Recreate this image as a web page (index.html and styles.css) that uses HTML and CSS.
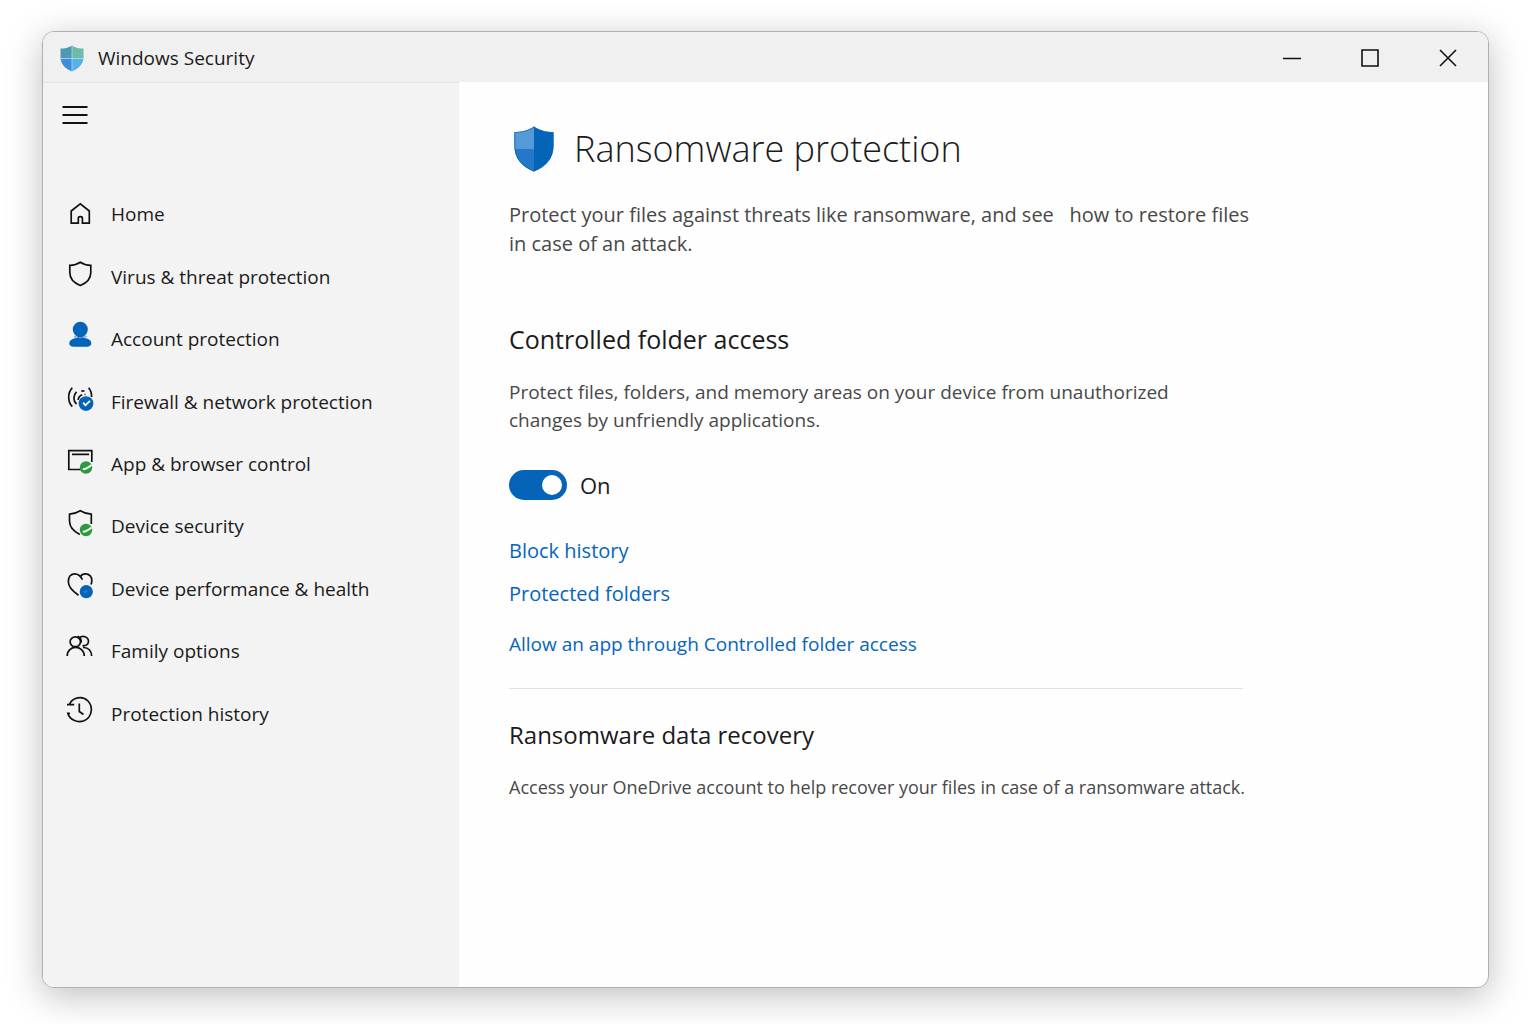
FILE: index.html
```html
<!DOCTYPE html>
<html lang="en">
<head>
    <meta charset="UTF-8">
    <meta name="viewport" content="width=device-width, initial-scale=1.0">
    <title>Windows Security</title>
    <link rel="stylesheet" href="styles.css">
</head>
<body>
    <div class="window">
        <header class="titlebar">
            <svg class="app-icon" viewBox="0 0 24 27">
                <defs>
                    <clipPath id="appShield">
                        <path d="M12 0.500C8.500 3 4.500 3.600 0.500 3.600V12C0.500 19 5 23.500 12 26.500C19 23.500 23.500 19 23.500 12V3.600C19.500 3.600 15.500 3 12 0.500Z"/>
                    </clipPath>
                </defs>
                <g clip-path="url(#appShield)">
                    <rect width="12" height="13.500" fill="#5099b4"/>
                    <rect x="12" width="12" height="13.500" fill="#6dbba9"/>
                    <rect y="13.500" width="12" height="14" fill="#3f8ddc"/>
                    <rect x="12" y="13.500" width="12" height="14" fill="#55b1e8"/>
                    <path d="M12 0V27M0 13.500H24" stroke="#a5dcec" stroke-width="0.800"/>
                </g>
            </svg>
            <span class="app-name">Windows Security</span>
            <div class="controls">
                <button type="button" aria-label="Minimize">
                    <svg viewBox="0 0 20 20"><path d="M1 10.500H19"/></svg>
                </button>
                <button type="button" aria-label="Maximize">
                    <svg viewBox="0 0 20 20"><path d="M2 2H18V18H2Z"/></svg>
                </button>
                <button type="button" aria-label="Close">
                    <svg viewBox="0 0 20 20"><path d="M2 2L18 18M18 2L2 18"/></svg>
                </button>
            </div>
        </header>

        <div class="content">
            <aside class="sidebar">
                <button type="button" class="menu-btn" aria-label="Menu">
                    <svg viewBox="0 0 26 20"><path d="M0.500 2H25.500M0.500 10H25.500M0.500 18H25.500"/></svg>
                </button>
                <nav>
                    <ul class="nav-list">
                        <li><a href="#">
                            <svg viewBox="0 0 28 28"><path d="M5.200 14L14.300 6.800L23.300 14V26.200H16.400V21.200Q16.400 19.600 14.300 19.600Q12.300 19.600 12.300 21.200V26.200H5.200Z"/></svg>
                            <span>Home</span>
                        </a></li>
                        <li><a href="#">
                            <svg viewBox="0 0 28 28"><path d="M14.300 2.200C11 4.500 7.500 5.200 3.800 5.400V12.500C3.800 18.800 8 23 14.300 25.500C20.600 23 24.800 18.800 24.800 12.500V5.400C21 5.200 17.600 4.500 14.300 2.200Z"/></svg>
                            <span>Virus &amp; threat protection</span>
                        </a></li>
                        <li><a href="#">
                            <svg viewBox="0 0 28 28">
                                <g class="blue">
                                    <ellipse cx="14.300" cy="7.600" rx="7.500" ry="7.800"/>
                                    <path d="M3.300 21.500C3.300 17.500 8 15.800 14.300 15.800C20.600 15.800 25.300 17.500 25.300 21.500C25.300 24 23 24.700 20.500 24.700H8C5.500 24.700 3.300 24 3.300 21.500Z"/>
                                    <path class="gap-line" d="M8 14.600Q14.300 17.200 20.600 14.600"/>
                                </g>
                            </svg>
                            <span>Account protection</span>
                        </a></li>
                        <li><a href="#">
                            <svg viewBox="0 0 28 28">
                                <path d="M6.300 2.800C1.500 7.500 1.500 17 6.300 21.600M10.500 6.800C7 10.500 7 15.500 10.500 19.200M16.200 9.800Q12.500 11.200 12.200 15M15.300 6.300Q17 5.600 18.500 6.200M22.600 2.800Q25.800 6.500 25.600 12M18.500 9.500H19.500"/>
                                <circle class="blue" cx="20" cy="18.600" r="7.400"/>
                                <path class="mark" d="M17.200 17.500L19.400 20.500M24 15.800L18.800 20.800"/>
                            </svg>
                            <span>Firewall &amp; network protection</span>
                        </a></li>
                        <li><a href="#">
                            <svg viewBox="0 0 28 28">
                                <path d="M15 22.500H2.800V3.700H25.800V15M6 7.400H23"/>
                                <circle class="green" cx="20" cy="20.500" r="6.200"/>
                                <path class="mark" d="M16.800 22.200Q20 22.500 25.500 18"/>
                            </svg>
                            <span>App &amp; browser control</span>
                        </a></li>
                        <li><a href="#">
                            <svg viewBox="0 0 28 28">
                                <path d="M13.800 25.500C7 22 3.500 18 3.500 12V5.200Q9.500 4.800 14.300 1.800Q19 4.800 25.300 5.200V15"/>
                                <circle class="green" cx="20" cy="21" r="6.200"/>
                                <path class="mark" d="M16.800 22.700Q20 23 25.500 18.500"/>
                            </svg>
                            <span>Device security</span>
                        </a></li>
                        <li><a href="#">
                            <svg viewBox="0 0 28 28">
                                <path d="M12.500 23.200C7 19.500 2.300 15.500 2.300 9.500C2.300 4.500 5 1.800 8.800 1.800C12.500 1.800 14.500 4 16.500 7.600M14.500 4.500C15.500 2.600 17.500 1.800 19.500 1.800C23.500 1.800 26 5 25.800 8.500Q25.800 10.500 25 12.500"/>
                                <circle class="blue" cx="20.300" cy="19.700" r="6.600"/>
                                <path class="tiny-mark" d="M18 19.300L19 20.500L21 18.500"/>
                            </svg>
                            <span>Device performance &amp; health</span>
                        </a></li>
                        <li><a href="#">
                            <svg viewBox="0 0 28 28">
                                <ellipse cx="9.300" cy="7.800" rx="5.200" ry="4.900"/>
                                <path d="M11.500 2.200Q15.500 3.500 15.300 8.500M13.500 3.800C16 1.200 22.300 2.300 22.500 7.300C22.500 10.500 19.500 12.300 16.500 11.500M1.200 22C1.200 10.500 18 10.500 18.300 22M17 13.500C22.500 13.200 25.500 17 25.700 22"/>
                            </svg>
                            <span>Family options</span>
                        </a></li>
                        <li><a href="#">
                            <svg viewBox="0 0 28 28"><path d="M3.200 7.500C6.500 0.500 16 -2 22 4C28 10.500 25.500 20.500 18 23.700C11 26.200 3.500 22.500 1.800 16.300H4M1 7.700H8.200M13.300 6.500V14.500L17.500 17.500"/></svg>
                            <span>Protection history</span>
                        </a></li>
                    </ul>
                </nav>
            </aside>

            <main class="main">
                <div class="page-title">
                    <svg viewBox="0 0 40 46">
                        <defs>
                            <clipPath id="pageShield">
                                <path d="M20 0.500C14.500 4.600 8 6 0.500 6.200V20C0.500 32.500 8 40.500 20 45.500C32 40.500 39.500 32.500 39.500 20V6.200C32 6 25.500 4.600 20 0.500Z"/>
                            </clipPath>
                        </defs>
                        <g clip-path="url(#pageShield)">
                            <rect width="40" height="46" fill="#0364b8"/>
                            <rect width="20" height="23" fill="#5499d8"/>
                            <rect y="23" width="20" height="23" fill="#2478c7"/>
                            <path d="M20 0.500C14.500 4.600 8 6 0.500 6.200V20C0.500 32.500 8 40.500 20 45.500C32 40.500 39.500 32.500 39.500 20V6.200C32 6 25.500 4.600 20 0.500Z" fill="none" stroke="#1268bb" stroke-width="1.500"/>
                        </g>
                    </svg>
                    <h1>Ransomware protection</h1>
                </div>
                <p class="intro">Protect your files against threats like ransomware, and see &nbsp;&nbsp;how to restore files<br>in case of an attack.</p>

                <section class="folder-access">
                    <h2>Controlled folder access</h2>
                    <p>Protect files, folders, and memory areas on your device from unauthorized<br>changes by unfriendly applications.</p>
                    <div class="switch">
                        <input type="checkbox" id="access" role="switch" checked>
                        <label for="access">On</label>
                    </div>
                    <ul class="links">
                        <li><a href="#">Block history</a></li>
                        <li><a href="#">Protected folders</a></li>
                        <li class="apart"><a href="#">Allow an app through Controlled folder access</a></li>
                    </ul>
                </section>

                <section class="recovery">
                    <h2>Ransomware data recovery</h2>
                    <p>Access your OneDrive account to help recover your files in case of a ransomware attack.</p>
                </section>
            </main>
        </div>
    </div>
</body>
</html>
```

FILE: styles.css
```css
*{
    margin: 0;
    padding: 0;
    box-sizing: border-box;
}
body{
    min-height: 100vh;
    padding: 31px 47px 36px 42px;
    display: flex;
    background-color: #fff;
    color: #1b1b1b;
    font-family: "Open Sans", "Noto Sans", sans-serif;
    font-size: 19px;
}
ul{
    list-style: none;
}
a{
    text-decoration: none;
}
button{
    border: none;
    background: none;
    cursor: pointer;
}
svg{
    display: block;
    flex-shrink: 0;
    overflow: visible;
}
.window{
    flex: 1;
    display: flex;
    flex-direction: column;
    border: 1px solid #b0b0b0;
    border-radius: 12px;
    overflow: hidden;
    background-color: #fefefe;
    box-shadow: 0 8px 36px rgba(0, 0, 0, .26);
}

/* title bar */
.titlebar{
    height: 50px;
    display: flex;
    align-items: center;
    padding: 2px 1px 0 17px;
    background-color: #f0f0f0;
}
.app-icon{
    width: 24px;
    height: 27px;
}
.app-name{
    margin-left: 14px;
}
.controls{
    margin-left: auto;
    display: flex;
}
.controls button{
    width: 78px;
    height: 48px;
    display: flex;
    align-items: center;
    justify-content: center;
}
.controls svg{
    width: 20px;
    height: 20px;
    fill: none;
    stroke: #111;
    stroke-width: 1.6;
}

.content{
    flex: 1;
    display: flex;
}

/* sidebar */
.sidebar{
    width: 416px;
    flex-shrink: 0;
    border-top: 1px solid #e2e2e2;
    background-color: #f3f3f3;
}
.menu-btn{
    margin: 22px 0 0 19px;
}
.menu-btn svg{
    width: 26px;
    height: 20px;
    fill: none;
    stroke: #111;
    stroke-width: 2;
}
.nav-list{
    height: 562px;
    margin-top: 52px;
    display: grid;
    grid-template-rows: repeat(9, 1fr);
}
.nav-list a{
    height: 100%;
    padding-left: 23px;
    display: flex;
    align-items: center;
    color: #1b1b1b;
}
.nav-list svg{
    width: 28px;
    height: 28px;
    margin: 0 17px 6px 0;
    fill: none;
    stroke: #111;
    stroke-width: 1.7;
}
.nav-list .blue{
    fill: #0563b8;
    stroke: none;
}
.nav-list .green{
    fill: #2b9a41;
    stroke: none;
}
.nav-list .gap-line{
    fill: none;
    stroke: #4a91cf;
    stroke-width: 1;
}
.nav-list .mark{
    stroke: #fff;
}
.nav-list .tiny-mark{
    stroke: #5da0dd;
    stroke-width: 1;
}

/* main */
.main{
    flex: 1;
    padding: 41px 50px;
    color: #484848;
}
.page-title{
    display: flex;
    align-items: center;
    padding-left: 5px;
}
.page-title svg{
    width: 40px;
    height: 46px;
}
h1{
    margin-left: 20px;
    color: #1b1b1b;
    font-size: 36px;
    font-weight: 300;
    line-height: 52px;
}
h2{
    color: #1b1b1b;
    font-size: 25px;
    font-weight: 400;
    line-height: 34px;
}
.intro{
    margin-top: 25px;
    font-size: 20px;
    line-height: 29px;
}
.folder-access{
    margin-top: 64px;
    padding-bottom: 30px;
    max-width: 734px;
    border-bottom: 1px solid #e0e0e0;
}
.folder-access p{
    margin-top: 22px;
    line-height: 28px;
}
.switch{
    margin-top: 36px;
    display: flex;
    align-items: center;
}
.switch input{
    appearance: none;
    width: 58px;
    height: 30px;
    padding: 5px;
    display: flex;
    border-radius: 15px;
    background-color: #767676;
    cursor: pointer;
}
.switch input::before{
    content: "";
    width: 20px;
    height: 20px;
    border-radius: 50%;
    background-color: #fff;
}
.switch input:checked{
    justify-content: flex-end;
    background-color: #0563b8;
}
.switch label{
    margin-left: 13px;
    color: #1b1b1b;
    font-size: 22px;
    line-height: 30px;
}
.links{
    margin-top: 37px;
    font-size: 20px;
    line-height: 28px;
}
.links li + li{
    margin-top: 15px;
}
.links li.apart{
    margin-top: 22px;
    font-size: 19px;
}
.links a{
    color: #0565bf;
}
.recovery{
    margin-top: 29px;
}
.recovery h2{
    font-size: 24px;
}
.recovery p{
    margin-top: 21px;
    font-size: 18px;
    line-height: 28px;
}
```
